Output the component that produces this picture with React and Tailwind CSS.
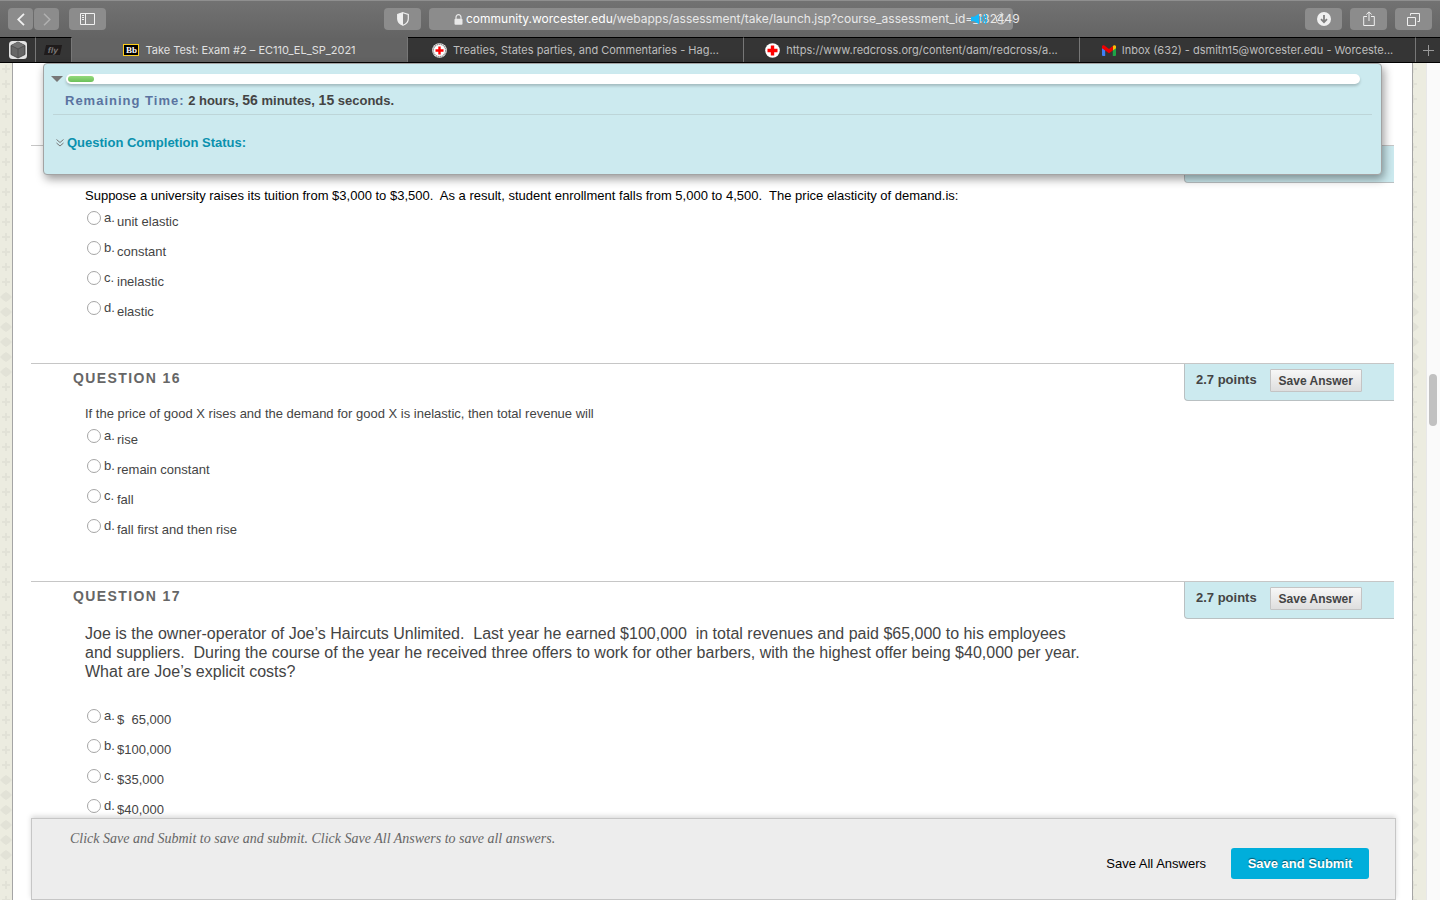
import React from 'react'

const questions = [
    {
        number: 15,
        text: 'Suppose a university raises its tuition from $3,000 to $3,500.\u00a0 As a result, student enrollment falls from 5,000 to 4,500.\u00a0 The price elasticity of demand.is:',
        textClass: 'mt-[3px] text-[13px] leading-5 text-black',
        options: ['unit elastic', 'constant', 'inelastic', 'elastic'],
    },
    {
        number: 16,
        text: 'If the price of good X rises and the demand for good X is inelastic, then total revenue will',
        textClass: 'mt-[3px] text-[13px] leading-5',
        options: ['rise', 'remain constant', 'fall', 'fall first and then rise'],
    },
    {
        number: 17,
        text: 'Joe is the owner-operator of Joe’s Haircuts Unlimited.\u00a0 Last year he earned $100,000\u00a0 in total revenues and paid $65,000 to his employees and suppliers.\u00a0 During the course of the year he received three offers to work for other barbers, with the highest offer being $40,000 per year. What are Joe’s explicit costs?',
        textClass: 'mt-[5px] mb-[23px] max-w-[1004px] text-base leading-[19px]',
        options: ['$\u00a0 65,000', '$100,000', '$35,000', '$40,000'],
    },
]

function BlackboardIcon() {
    return (
        <span className="flex h-3 w-4 items-center justify-center border border-[#ffcf1a] bg-black font-['Liberation_Serif',serif] text-[9px] leading-none font-bold text-white">
            Bb
        </span>
    )
}

function CrossIcon({ ring }) {
    return (
        <svg width="15" height="15" viewBox="0 0 15 15" aria-hidden="true">
            <circle cx="7.5" cy="7.5" r="7.3" fill="#fff" />
            {ring && <circle cx="7.5" cy="7.5" r="6.3" fill="none" stroke="#999" strokeWidth="1.5" strokeDasharray="1.5 .5" />}
            {ring ? (
                <path d="M6.3 3.5h2.4v2.8h2.8v2.4H8.7v2.8H6.3V8.7H3.5V6.3h2.8z" fill="#f00" />
            ) : (
                <path d="M5.8 2.5h3.4v3.3h3.3v3.4H9.2v3.3H5.8V9.2H2.5V5.8h3.3z" fill="#f00" />
            )}
        </svg>
    )
}

function GmailIcon() {
    return (
        <svg width="14" height="11" viewBox="0 0 14 11" aria-hidden="true">
            <path d="M0 2.5l3.2 2.4V11H1a1 1 0 0 1-1-1z" fill="#3f7ff5" />
            <path d="M14 2.5l-3.2 2.4V11H13a1 1 0 0 0 1-1z" fill="#1ea446" />
            <path d="M10.8 1.1l.8-.6C12.6-.3 14 .3 14 1.6V3.2l-3.2 2.4z" fill="#fbbc04" />
            <path d="M0 1.6C0 .3 1.4-.3 2.4.5L7 3.9 10.8 1.1v4.4L7 8.3 3.2 5.5 0 3.2z" fill="#f00000" />
        </svg>
    )
}

function CubeIcon() {
    return (
        <svg width="18" height="18" viewBox="0 0 18 18" aria-hidden="true">
            <rect width="18" height="18" rx="3.5" fill="#e3e3e3" />
            <path d="M9 1l7 3.5v9L9 17l-7-3.5v-9z" fill="#666" stroke="#3c3c3c" strokeWidth=".8" />
            <path d="M2 4.5L9 8l7-3.5L9 1z" fill="#747474" />
            <path d="M9 8v9M2 4.5L9 8l7-3.5" fill="none" stroke="#4a4a4a" strokeWidth=".8" />
        </svg>
    )
}

function ToolButton({ label, className = 'w-[37px]', children }) {
    return (
        <button aria-label={label} className={`flex h-[22px] shrink-0 items-center justify-center rounded bg-[#8c8c8c] text-[#f0f0f0] ${className}`}>
            {children}
        </button>
    )
}

function AddressBar() {
    return (
        <div className="relative ml-2 flex h-[22px] w-[584px] items-center rounded bg-[#8c8c8c] pl-[25px] text-[#e8e8e8]">
            <svg width="9" height="11" viewBox="0 0 9 11" className="shrink-0" aria-hidden="true">
                <path d="M2 5V3.2a2.5 2.5 0 0 1 5 0V5" fill="none" stroke="currentColor" strokeWidth="1.2" />
                <rect x=".5" y="4.7" width="8" height="6" rx="1" fill="currentColor" />
            </svg>
            <span className="ml-[3px] text-[12px] whitespace-nowrap">
                <span className="text-white">community.worcester.edu</span>/webapps/assessment/take/launch.jsp?course_assessment_id=_132449
            </span>
            <button aria-label="Mute tab" className="absolute top-[5px] right-[26px] text-[#14b9fb]">
                <svg width="16" height="12" viewBox="0 0 16 12" fill="none" stroke="currentColor" strokeWidth="1.2" aria-hidden="true">
                    <path d="M0 3.7h3L8 .7v10.6l-5-3H0z" fill="currentColor" stroke="none" />
                    <path d="M10 4c1 1 1 3 0 4M12 2.5c2 2 2 5 0 7M14 1c2.3 3 2.3 7 0 10" />
                </svg>
            </button>
            <button aria-label="Reload" className="absolute top-[4px] right-[6px]">
                <svg width="12" height="13" viewBox="0 0 12 13" fill="none" stroke="currentColor" aria-hidden="true">
                    <path d="M6 2.5a4.7 4.7 0 1 0 4.7 4.7M5.5.3L8.3 2.5 5.5 4.8" />
                </svg>
            </button>
        </div>
    )
}

function Toolbar() {
    return (
        <div className="flex h-[37px] items-center border-t border-[#8f8f8f] bg-linear-to-b from-[#727272] to-[#646464] px-2">
            <div className="flex flex-1">
                <ToolButton label="Back" className="w-[25px]">
                    <svg width="8" height="13" viewBox="0 0 8 13" fill="none" stroke="currentColor" strokeWidth="1.8" aria-hidden="true">
                        <path d="M7 .8L1.2 6.5 7 12.2" />
                    </svg>
                </ToolButton>
                <ToolButton label="Forward" className="ml-px w-[25px]">
                    <svg width="8" height="13" viewBox="0 0 8 13" fill="none" stroke="#b0b0b0" strokeWidth="1.5" aria-hidden="true">
                        <path d="M1 .8l5.8 5.7L1 12.2" />
                    </svg>
                </ToolButton>
                <ToolButton label="Show sidebar" className="ml-2.5 w-[37px]">
                    <svg width="15" height="12" viewBox="0 0 15 12" fill="none" stroke="currentColor" aria-hidden="true">
                        <path d="M.5.5h14v11H.5zM5.5.5v11M2 2.5h2M2 4.5h2M2 6.5h2" />
                    </svg>
                </ToolButton>
            </div>
            <ToolButton label="Privacy report">
                <svg width="12" height="14" viewBox="0 0 12 14" aria-hidden="true">
                    <path d="M6 .7l5.3 1.8v4.2c0 3-2.2 5.3-5.3 6.6C2.9 12 .7 9.7.7 6.7V2.5z" fill="none" stroke="currentColor" strokeWidth="1.2" />
                    <path d="M6 .7L.7 2.5v4.2c0 3 2.2 5.3 5.3 6.6z" fill="currentColor" />
                </svg>
            </ToolButton>
            <AddressBar />
            <div className="flex flex-1 justify-end gap-2 pl-[43px]">
                <ToolButton label="Downloads">
                    <svg width="14" height="14" viewBox="0 0 14 14" aria-hidden="true">
                        <circle cx="7" cy="7" r="7" fill="currentColor" />
                        <path d="M7 3v7M4 7.2l3 3 3-3" fill="none" stroke="#808080" strokeWidth="1.8" />
                    </svg>
                </ToolButton>
                <ToolButton label="Share">
                    <svg width="12" height="16" viewBox="0 0 12 16" fill="none" stroke="currentColor" aria-hidden="true">
                        <path d="M4 5.5H.7v9h10.6v-9H8M6 10V1M3.3 3.5L6 .9l2.7 2.6" />
                    </svg>
                </ToolButton>
                <ToolButton label="Show tab overview">
                    <svg width="13" height="13" viewBox="0 0 13 13" fill="none" stroke="currentColor" aria-hidden="true">
                        <path d="M.5 4.5h8v8h-8zM3.5 2.5v-2h9v8h-2" />
                    </svg>
                </ToolButton>
            </div>
        </div>
    )
}

function Tab({ icon, title, active }) {
    return (
        <a
            href="#"
            className={`flex min-w-0 flex-1 items-center justify-center gap-[6px] border-t border-r border-r-[#777] px-2 text-[11px] whitespace-nowrap ${
                active ? 'border-t-[#646464] bg-[#636363] text-[#e0e0e0]' : 'border-t-black bg-[#353535] text-[#bdbdbd]'
            }`}
        >
            {icon}
            <span>{title}</span>
        </a>
    )
}

function TabBar() {
    return (
        <nav className="flex h-[26px] border-b border-black bg-[#353535]">
            <a href="#" aria-label="Pinned tab" className="flex w-9 items-center justify-center border-t border-r border-t-black border-r-[#777]">
                <CubeIcon />
            </a>
            <a href="#" className="flex w-9 items-center justify-center border-t border-r border-t-black border-r-[#777]">
                <span className="-skew-x-12 bg-[#1f1b1b] px-[3px] text-[8px] leading-[10px] font-bold text-[#777]">fly</span>
            </a>
            <Tab active icon={<BlackboardIcon />} title="Take Test: Exam #2 – EC110_EL_SP_2021" />
            <Tab icon={<CrossIcon ring />} title="Treaties, States parties, and Commentaries - Hag..." />
            <Tab icon={<CrossIcon />} title="https://www.redcross.org/content/dam/redcross/a..." />
            <Tab icon={<GmailIcon />} title="Inbox (632) - dsmith15@worcester.edu - Worceste..." />
            <button aria-label="New tab" className="flex w-6 items-center justify-center border-t border-black text-[#999]">
                <svg width="11" height="11" viewBox="0 0 11 11" stroke="currentColor" aria-hidden="true">
                    <path d="M5.5 0v11M0 5.5h11" />
                </svg>
            </button>
        </nav>
    )
}

function TimerPanel() {
    return (
        <aside className="absolute top-0 right-[30px] left-[30px] h-28 rounded-[4px] border border-[#a3a3a3] bg-[#cceaef] px-[9px] shadow-[2px_4px_10px_rgba(0,0,0,0.4)]">
            <div className="flex items-center gap-[3px] pt-[10px] pr-3">
                <button aria-label="Collapse timer" className="ml-[-2px] px-0">
                    <svg width="12" height="6" viewBox="0 0 12 6" aria-hidden="true">
                        <path d="M0 0h12L6 6z" fill="#777" />
                    </svg>
                </button>
                <div className="h-[10px] flex-1 rounded-full bg-white p-0.5 shadow-[0_2px_3px_rgba(0,0,0,0.2)]">
                    <div className="h-1.5 w-[26px] rounded-full bg-linear-to-b from-[#94d97c] to-[#6cc05a]" />
                </div>
            </div>
            <p className="ml-3 pt-[6px] text-[13px] leading-5 font-bold text-[#444]">
                <span className="tracking-[1px] text-[#5a73a0]">Remaining Time:</span> 2 hours, <span className="text-[14px]">56</span> minutes,{' '}
                <span className="text-[14px]">15</span> seconds.
            </p>
            <hr className="mt-[3px] border-[#bdd5d8]" />
            <button className="mt-[18px] ml-[3px] flex items-center gap-[3px] text-[13px] leading-5 font-bold text-[#0a91ae]">
                <svg width="8" height="8" viewBox="0 0 8 8" fill="none" stroke="#777" aria-hidden="true">
                    <path d="M.5.5L4 3.5 7.5.5M.5 4L4 7l3.5-3" />
                </svg>
                Question Completion Status:
            </button>
        </aside>
    )
}

function Question({ number, text, textClass, options }) {
    return (
        <section className="border-t border-[#c6c6c6] pb-[37px]">
            <div className="flex h-[37px] justify-between">
                <h2 className="ml-[42px] pt-1 text-[14px] leading-5 font-bold tracking-widest text-[#666]">QUESTION {number}</h2>
                <div className="flex w-[210px] items-start rounded-bl-[4px] border-b border-l border-[#b9c0c2] bg-[#cceaef] pt-[5px] pl-[11px] font-bold text-[#444]">
                    <span className="text-[13px] leading-[22px]">2.7 points</span>
                    <button className="ml-[13px] h-[23px] w-[92px] rounded-[1px] border border-[#c4c4c4] bg-linear-to-b from-[#f7f7f7] to-[#dedede] text-[12px]">
                        Save Answer
                    </button>
                </div>
            </div>
            <fieldset className="ml-[54px]">
                <p className={textClass}>{text}</p>
                {options.map((option, i) => (
                    <label key={option} className="flex h-[30px] items-start text-[13px] leading-5">
                        <input
                            type="radio"
                            name={`question-${number}`}
                            className="mt-[5px] ml-[2px] size-[14px] shrink-0 appearance-none rounded-full border border-[#a6a6a6] bg-white"
                        />
                        <span className="ml-[3px] w-[13px] pt-[2px]">{'abcd'[i]}.</span>
                        <span className="pt-[6px]">{option}</span>
                    </label>
                ))}
            </fieldset>
        </section>
    )
}

// one repeat of the leaf strip: 11 small marks, 6 large ones, 15 small ones
const marks = Array.from({ length: 32 }, (_, i) => ({ y: 7 + i * 15, large: i > 10 && i < 17 }))

function Gutter({ id, x, className }) {
    return (
        <div className={`shrink-0 bg-[#ecece0] ${className}`}>
            <svg className="size-full" aria-hidden="true">
                <defs>
                    <pattern id={id} y="62" width="30" height="483" patternUnits="userSpaceOnUse">
                        {marks.map(({ y, large }) =>
                            large ? (
                                <path key={y} d={`M${x} ${y - 5}l3 2 3 3-3 3-3 2-3-2-3-3 3-3z`} fill="#e2e2d7" />
                            ) : (
                                <path key={y} d={`M${x - 4} ${y}h8M${x} ${y - 4}v8`} stroke="#e2e2d7" strokeWidth="2" />
                            )
                        )}
                    </pattern>
                </defs>
                <rect width="100%" height="100%" fill={`url(#${id})`} />
            </svg>
        </div>
    )
}

function App() {
    return (
        <div className="flex h-screen flex-col overflow-hidden bg-white font-['Inter',sans-serif]">
            <Toolbar />
            <TabBar />
            <div className="flex min-h-0 flex-1 font-['Liberation_Sans',Arial,sans-serif] text-[#444]">
                <Gutter id="leaves-left" x={6} className="w-3" />
                <main className="relative flex min-w-0 flex-1 flex-col border-x border-[#a5a5a5] bg-white">
                    <div className="min-h-0 flex-1 overflow-hidden pt-[82px] pr-[18px] pl-[18px]">
                        {questions.map((q) => (
                            <Question key={q.number} {...q} />
                        ))}
                    </div>
                    <TimerPanel />
                    <footer className="mr-4 ml-[18px] border border-[#c6c6c6] bg-[#ededed] px-[26px] pt-[10px] pb-5 shadow-[0_-2px_5px_rgba(0,0,0,0.15)]">
                        <p className="ml-3 font-['Liberation_Serif',serif] text-[14px] leading-[19px] text-[#666] italic">
                            Click Save and Submit to save and submit. Click Save All Answers to save all answers.
                        </p>
                        <div className="flex justify-end text-[13px]">
                            <button className="h-[31px] px-[25px] text-black">Save All Answers</button>
                            <button className="h-[31px] w-[138px] rounded-[3px] bg-[#00aedb] font-bold text-white text-shadow-[0_-1px_1px_rgba(0,0,0,0.5)]">Save and Submit</button>
                        </div>
                    </footer>
                </main>
                <Gutter id="leaves-right" x={0} className="w-[13px]" />
                <div className="w-[14px] shrink-0 border-l border-[#e8e8e8] bg-[#fafafa] pt-[311px] pl-[2px]">
                    <div className="h-[52px] w-2 rounded-full bg-[#c1c1c1]" />
                </div>
            </div>
        </div>
    )
}

export default App
